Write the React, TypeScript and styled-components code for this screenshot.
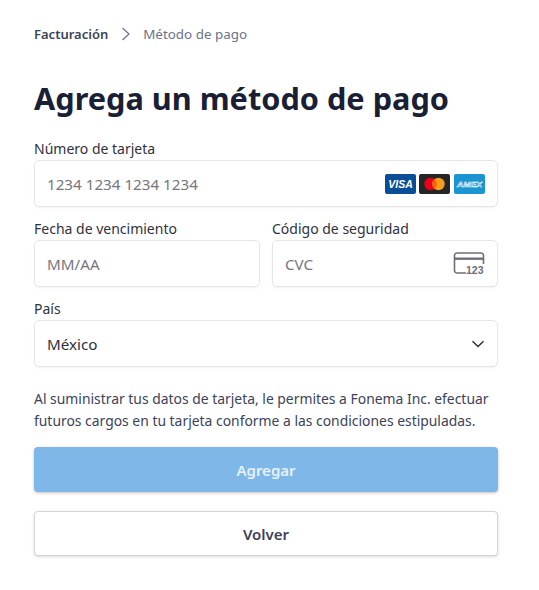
import React from "react";
import styled, { createGlobalStyle } from "styled-components";

const GlobalStyle = createGlobalStyle`
  body {
    margin: 0;
    background: #fff;
    font-family: "Noto Sans", "Open Sans", sans-serif;
    color: #1a1f36;
  }
`;

const Page = styled.div`
  width: 464px;
  padding: 24px 41px 34px 34px;
`;

const Breadcrumb = styled.nav`
  display: flex;
  align-items: center;
  height: 20px;
  font-size: 13px;
`;

const Crumb = styled.span<{ $current?: boolean }>`
  color: ${(p) => (p.$current ? "#697386" : "#3c4257")};
  font-size: ${(p) => (p.$current ? "13.4px" : "13px")};
  font-weight: ${(p) => (p.$current ? 400 : 600)};
`;

const CrumbSeparator = styled.svg`
  width: 10px;
  height: 14px;
  margin: 0 12px 0 13px;
`;

const Title = styled.h1`
  margin: 23px 0 8px;
  font-size: 30.7px;
  line-height: 62px;
  font-weight: 700;
  color: #1a1f36;
`;

const Form = styled.form`
  display: flex;
  flex-direction: column;
`;

const FieldRow = styled.div`
  display: grid;
  grid-template-columns: 226px 226px;
  gap: 12px;
  margin-top: 10px;
`;

const Field = styled.div<{ $spaced?: boolean }>`
  display: flex;
  flex-direction: column;
  margin-top: ${(p) => (p.$spaced ? "10px" : "0")};
`;

const Label = styled.label`
  font-size: 14px;
  line-height: 22px;
  height: 22px;
  color: #30313d;
  margin-top: 1px;
  margin-bottom: -2px;
`;

const InputBox = styled.div`
  display: flex;
  align-items: center;
  justify-content: space-between;
  height: 45px;
  margin-top: 2px;
  padding: 0 12px;
  background: #fff;
  border: 1px solid #e6e6e6;
  border-radius: 5px;
  box-shadow: 0 1px 1px rgba(0, 0, 0, 0.03), 0 3px 6px rgba(0, 0, 0, 0.02);
  font-size: 15.2px;
`;

const Placeholder = styled.span`
  color: #757680;
`;

const Value = styled.span`
  color: #30313d;
`;

const Brands = styled.div`
  display: flex;
  gap: 3px;

  svg:last-child {
    margin-left: 1px;
  }
`;

const Notice = styled.p`
  margin: 21px 0 0;
  font-size: 13.9px;
  line-height: 22px;
  color: #3c4257;
`;

const Button = styled.button<{ $primary?: boolean }>`
  display: block;
  width: 464px;
  height: 45px;
  margin-top: ${(p) => (p.$primary ? "15px" : "19px")};
  border-radius: 4px;
  font-family: inherit;
  font-size: 15px;
  font-weight: 600;
  color: ${(p) => (p.$primary ? "#e6f1fb" : "#3c4257")};
  background: ${(p) => (p.$primary ? "#7fb8e8" : "#fff")};
  border: ${(p) => (p.$primary ? "none" : "1px solid #d5d5d8")};
  box-shadow: 0 1px 3px rgba(0, 0, 0, ${(p) => (p.$primary ? 0.25 : 0.15)});
`;

const VisaIcon = () => (
  <svg width="31" height="20" viewBox="0 0 31 20">
    <rect width="31" height="20" rx="2" fill="#0a4f96" />
    <text x="15.5" y="14" textAnchor="middle" fontFamily="Liberation Sans" fontSize="10.5" fontWeight="700" fontStyle="italic" fill="#fff">
      VISA
    </text>
  </svg>
);

const MastercardIcon = () => (
  <svg width="31" height="20" viewBox="0 0 31 20">
    <rect width="31" height="20" rx="2" fill="#252525" />
    <circle cx="11.5" cy="10" r="6.2" fill="#eb001b" />
    <circle cx="19.5" cy="10" r="6.2" fill="#f79e1b" />
    <path d="M15.5 5.2a6.2 6.2 0 0 1 0 9.6a6.2 6.2 0 0 1 0-9.6z" fill="#ff5f00" />
  </svg>
);

const AmexIcon = () => (
  <svg width="31" height="20" viewBox="0 0 31 20">
    <rect width="31" height="20" rx="2" fill="#1b95d2" />
    <text x="15.5" y="13" textAnchor="middle" textLength="25" lengthAdjust="spacingAndGlyphs" fontFamily="Liberation Sans" fontSize="8" fontWeight="700" fontStyle="italic" fill="none" stroke="#fff" strokeWidth="0.5">
      AMEX
    </text>
  </svg>
);

const CvcIcon = () => (
  <svg width="32" height="24" viewBox="0 0 32 24">
    <path d="M13 21H4a2.5 2.5 0 0 1-2.5-2.5v-15A2.5 2.5 0 0 1 4 1h24a2.5 2.5 0 0 1 2.5 2.5V12" fill="none" stroke="#6d6e78" strokeWidth="1.6" />
    <rect x="1.5" y="5.5" width="29" height="2.4" fill="#6d6e78" />
    <text x="13" y="22" fontFamily="Liberation Sans" fontSize="10.5" fontWeight="700" fill="#6d6e78">
      123
    </text>
  </svg>
);

const Chevron = () => (
  <svg width="14" height="8" viewBox="0 0 14 8">
    <path d="M1.5 1.2 7 6.5l5.5-5.3" fill="none" stroke="#30313d" strokeWidth="1.5" />
  </svg>
);

const App: React.FC = () => {
  return (
    <>
      <GlobalStyle />
      <Page>
        <Breadcrumb>
          <Crumb>Facturación</Crumb>
          <CrumbSeparator viewBox="0 0 10 14">
            <path d="M1.5 1 8 7l-6.5 6" fill="none" stroke="#697386" strokeWidth="1.2" />
          </CrumbSeparator>
          <Crumb $current>Método de pago</Crumb>
        </Breadcrumb>
        <Title>Agrega un método de pago</Title>
        <Form>
          <Field>
            <Label>Número de tarjeta</Label>
            <InputBox>
              <Placeholder>1234 1234 1234 1234</Placeholder>
              <Brands>
                <VisaIcon />
                <MastercardIcon />
                <AmexIcon />
              </Brands>
            </InputBox>
          </Field>
          <FieldRow>
            <Field>
              <Label>Fecha de vencimiento</Label>
              <InputBox>
                <Placeholder>MM/AA</Placeholder>
              </InputBox>
            </Field>
            <Field>
              <Label>Código de seguridad</Label>
              <InputBox>
                <Placeholder>CVC</Placeholder>
                <CvcIcon />
              </InputBox>
            </Field>
          </FieldRow>
          <Field $spaced>
            <Label>País</Label>
            <InputBox>
              <Value>México</Value>
              <Chevron />
            </InputBox>
          </Field>
          <Notice>
            Al suministrar tus datos de tarjeta, le permites a Fonema Inc. efectuar
            <br />
            futuros cargos en tu tarjeta conforme a las condiciones estipuladas.
          </Notice>
          <Button type="button" $primary>
            Agregar
          </Button>
          <Button type="button">Volver</Button>
        </Form>
      </Page>
    </>
  );
};

export default App;
